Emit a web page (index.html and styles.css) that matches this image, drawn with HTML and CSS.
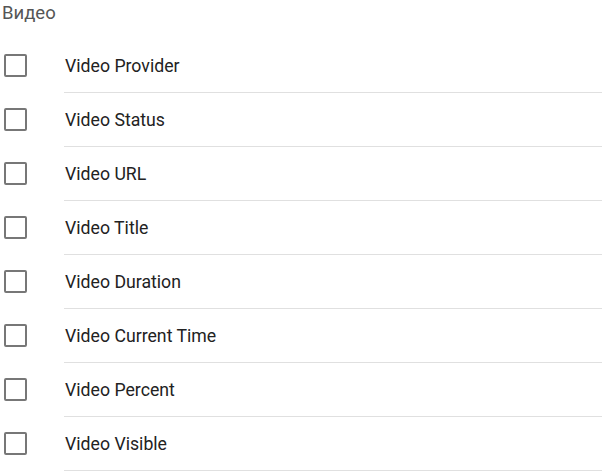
FILE: index.html
```html
<!DOCTYPE html>
<html lang="ru">
<head>
    <meta charset="UTF-8">
    <title>Видео</title>
    <link rel="stylesheet" href="styles.css">
</head>
<body>
    <div class="section">
        <div class="section-title">Видео</div>
        <ul class="field-list">
            <li class="field-row"><span class="checkbox"></span><span class="field-name">Video Provider</span></li>
            <li class="field-row"><span class="checkbox"></span><span class="field-name">Video Status</span></li>
            <li class="field-row"><span class="checkbox"></span><span class="field-name">Video URL</span></li>
            <li class="field-row"><span class="checkbox"></span><span class="field-name">Video Title</span></li>
            <li class="field-row"><span class="checkbox"></span><span class="field-name">Video Duration</span></li>
            <li class="field-row"><span class="checkbox"></span><span class="field-name">Video Current Time</span></li>
            <li class="field-row"><span class="checkbox"></span><span class="field-name">Video Percent</span></li>
            <li class="field-row"><span class="checkbox"></span><span class="field-name">Video Visible</span></li>
        </ul>
    </div>
</body>
</html>
```

FILE: styles.css
```css
body {
    margin: 0;
    background: #ffffff;
    font-family: Roboto, "Noto Sans", sans-serif;
}

.section-title {
    height: 39px;
    padding-left: 2px;
    font-size: 18.5px;
    line-height: 26px;
    color: #555555;
}

.field-list {
    list-style: none;
    margin: 0;
    padding: 0;
}

.field-row {
    display: flex;
    align-items: center;
}

.checkbox {
    flex: none;
    width: 19px;
    height: 19px;
    margin: 0 37px 2px 4px;
    border: 2px solid #777777;
    border-radius: 2px;
}

.field-name {
    flex: 1;
    display: flex;
    align-items: center;
    padding: 1px 0 0 1px;
    box-sizing: border-box;
    height: 54px;
    border-bottom: 1px solid #e0e0e0;
    font-size: 17.7px;
    color: #222222;
}
```
